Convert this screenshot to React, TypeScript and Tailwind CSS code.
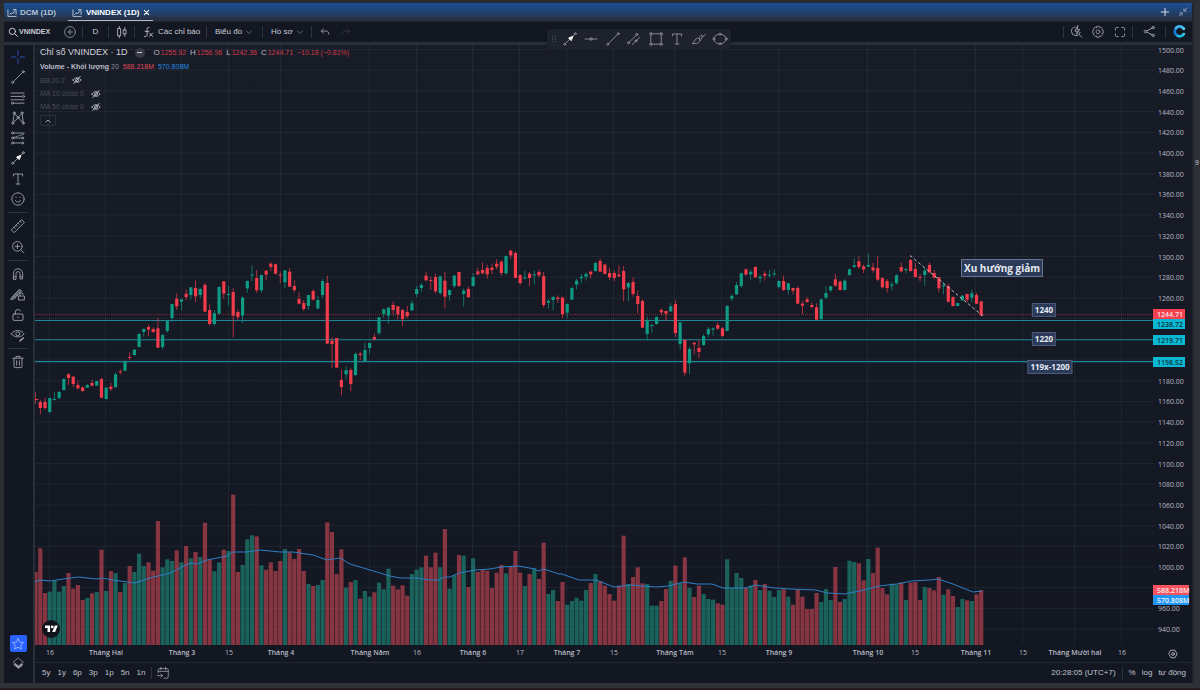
import React from "react";

/* Plot geometry: the drawing is 1119 x 600 units, three data units to one plot unit. */
const PLOT_W = 1119;
const PLOT_H = 600;
const STEP = 4.7045;
const barX = (i: number) => 0.6 + STEP * i;

/* Candles: body top, body bottom, high, low, 1 = rising / 0 = falling. */
const CANDLES: number[][] = [
  [507,510,487,521,0],[516,534,509,553,0],[516,534,503,540,0],[504,546,504,550,1],[507,510,487,511,1],
  [486,504,483,507,1],[447,480,445,482,1],[433,444,430,464,0],[440,462,437,472,0],[465,475,452,478,0],
  [472,483,470,487,0],[465,473,462,474,1],[459,467,449,469,0],[453,467,453,468,1],[447,503,443,505,0],
  [473,507,470,509,1],[470,477,458,483,0],[433,472,427,473,1],[424,427,418,433,0],[395,422,391,423,1],
  [381,384,367,391,0],[359,375,357,377,1],[312,351,310,351,1],[297,306,295,320,1],[291,299,284,319,0],
  [297,306,292,309,0],[295,353,263,354,0],[315,351,312,357,1],[273,303,272,308,1],[222,264,222,275,1],
  [206,229,190,240,0],[208,215,206,241,1],[191,201,178,211,0],[172,195,171,209,1],[174,199,151,215,0],
  [177,195,173,203,1],[165,245,158,246,0],[240,282,223,287,0],[250,282,240,287,1],[171,251,169,252,1],
  [154,191,153,207,0],[192,194,168,227,1],[186,257,175,322,0],[246,261,237,269,0],[203,257,199,279,1],
  [153,175,152,189,1],[134,137,106,153,1],[144,181,120,188,0],[135,181,134,188,1],[122,134,121,151,0],
  [101,111,97,124,0],[103,131,101,133,0],[134,137,124,160,0],[121,157,120,174,1],[125,170,114,171,0],
  [168,180,150,187,0],[207,221,187,223,0],[219,237,210,243,0],[195,228,195,240,1],[183,209,178,211,0],
  [210,235,198,238,1],[153,195,147,204,1],[159,341,137,343,0],[332,342,322,414,0],[324,413,324,413,0],
  [450,471,419,496,0],[420,433,410,448,1],[420,462,414,484,0],[372,435,367,438,1],[371,375,365,390,0],
  [360,394,338,396,1],[339,354,337,371,1],[321,328,310,332,0],[262,309,261,315,1],[238,252,235,264,1],
  [233,257,231,281,1],[225,240,214,257,0],[229,253,228,268,0],[240,267,237,287,0],[246,259,228,264,0],
  [220,241,211,243,1],[177,192,168,201,1],[165,174,160,185,1],[137,151,125,153,0],[150,153,140,180,0],
  [141,184,131,190,0],[139,189,138,195,1],[152,200,126,235,0],[180,195,179,212,1],[137,168,134,174,1],
  [126,168,125,171,0],[182,192,175,230,1],[177,201,170,204,0],[141,168,129,170,1],[124,133,113,136,0],
  [120,130,97,132,0],[114,133,104,146,0],[113,120,101,132,0],[101,110,88,118,0],[95,129,91,138,0],
  [78,130,76,134,1],[62,76,60,87,0],[69,144,64,144,0],[135,159,133,165,0],[142,145,122,149,1],
  [131,144,126,169,0],[133,136,121,163,1],[126,136,118,142,0],[138,225,126,232,0],[213,218,206,235,1],
  [201,210,198,241,1],[203,207,196,219,0],[203,252,200,264,0],[222,248,220,265,1],[174,209,170,210,1],
  [152,164,146,178,1],[140,145,132,160,1],[132,140,127,152,1],[125,133,122,146,0],[99,123,97,125,1],
  [93,125,86,126,0],[104,132,101,133,0],[129,142,113,150,0],[129,144,122,153,0],[134,139,106,142,0],
  [123,178,108,214,0],[159,172,156,213,1],[156,192,142,200,0],[198,222,181,250,0],[213,293,208,294,0],
  [270,312,260,331,1],[285,288,280,308,1],[261,282,259,284,1],[240,247,235,256,0],[243,251,242,273,0],
  [229,244,220,246,1],[222,309,211,321,0],[277,342,276,358,1],[330,428,328,437,0],[357,400,350,432,1],
  [338,343,337,374,0],[354,366,331,384,0],[318,345,312,348,1],[297,313,291,322,1],[295,299,292,317,1],
  [285,296,276,299,0],[295,318,291,321,0],[228,303,226,304,1],[198,206,192,213,1],[165,193,155,195,1],
  [130,168,128,173,1],[118,134,116,137,0],[125,133,119,149,1],[111,142,109,144,0],[140,145,134,158,1],
  [131,137,123,151,0],[134,136,120,143,1],[130,132,118,140,1],[153,171,151,176,1],[153,180,137,183,0],
  [160,180,158,194,1],[174,182,173,193,0],[174,221,168,223,0],[221,227,212,252,0],[208,216,202,218,0],
  [225,231,217,236,0],[232,269,220,270,0],[208,268,206,268,1],[189,203,168,209,1],[169,181,168,187,1],
  [148,167,132,170,0],[155,180,151,182,0],[152,180,147,182,1],[118,135,115,137,1],[106,111,84,113,1],
  [94,111,79,117,0],[109,118,104,129,0],[105,110,71,111,1],[112,121,99,128,0],[114,149,79,153,0],
  [144,172,141,175,0],[153,174,147,188,0],[163,167,155,181,1],[136,160,132,163,1],[111,124,97,127,0],
  [117,119,113,130,1],[90,123,87,125,0],[117,141,98,142,0],[141,143,132,154,0],[122,135,113,167,1],
  [105,127,97,130,0],[129,143,120,145,0],[142,175,141,187,0],[166,168,157,193,1],[168,215,161,218,0],
  [201,228,199,230,0],[219,228,218,229,1],[197,211,195,212,1],[192,209,191,217,0],[190,203,179,217,1],
  [195,221,189,222,0],[214,256,213,258,0],
];

/* Tops of the volume bars, measured down from 495 at the base line. */
const VOLUME: number[] = [
  276,205,339,335,301,335,318,279,326,315,360,354,340,336,209,333,273,279,336,309,
  258,276,221,258,247,272,123,262,238,243,211,247,198,235,216,231,128,237,274,247,
  209,213,44,276,255,178,166,169,256,269,247,273,243,207,217,237,207,273,312,318,
  315,300,127,156,282,208,323,306,300,356,333,350,337,308,328,266,317,328,316,347,
  282,269,262,227,262,218,262,147,326,286,225,227,321,235,276,270,272,324,278,255,
  280,260,213,278,318,282,265,297,188,342,330,363,306,374,363,353,362,330,309,282,
  303,317,342,362,317,167,312,291,262,310,312,377,377,363,327,303,257,310,232,324,
  351,317,342,357,359,370,374,238,323,279,294,323,317,300,330,312,332,351,330,328,
  350,374,327,350,387,387,339,366,327,360,261,366,357,242,246,250,301,237,279,203,
  324,343,311,314,307,360,308,306,360,321,324,331,291,344,328,348,381,357,361,363,
  343,330,
];

const VOLUME_AVERAGE =
  "0,537 5,535 15,536 28,534 43,532 62,534 67,533 78,535 100,538 115,533 135,528 155,518 162,519 172,515 192,511 198,507 212,507 225,505 245,507 258,507 278,510 292,515 305,513 315,519 335,525 355,531 365,533 382,533 395,535 403,535 410,532 415,532 424,528 440,525 455,524 466,522 483,521 500,524 503,526 509,524 524,529 527,529 544,535 561,535 579,542 596,540 607,541 622,542 633,541 649,537 662,539 677,539 688,543 711,543 720,540 740,543 755,544 781,545 792,548 810,549 829,545 844,541 862,539 877,536 894,535 903,534 918,539 938,547 947,546";

const TIMES: { x: number; label: string }[] = [
  { x: 15, label: "16" },
  { x: 71, label: "Tháng Hai" },
  { x: 147, label: "Tháng 3" },
  { x: 194, label: "15" },
  { x: 246, label: "Tháng 4" },
  { x: 335, label: "Tháng Năm" },
  { x: 382, label: "16" },
  { x: 438, label: "Tháng 6" },
  { x: 485, label: "17" },
  { x: 532, label: "Tháng 7" },
  { x: 579, label: "15" },
  { x: 640, label: "Tháng Tám" },
  { x: 687, label: "15" },
  { x: 744, label: "Tháng 9" },
  { x: 833, label: "Tháng 10" },
  { x: 880, label: "15" },
  { x: 941, label: "Tháng 11" },
  { x: 988, label: "15" },
  { x: 1040, label: "Tháng Mười hai" },
  { x: 1087, label: "16" },
];

const PRICES = Array.from({ length: 29 }, (_, i) => ({ value: 1500 - i * 20, y: 4.5 + i * 20.7 }));

const TAGS = [
  { y: 269, text: "1244.71", look: "bg-[#f7404f] text-[#ffe1e3] w-8" },
  { y: 279, text: "1238.72", look: "bg-[#0bb8d4] text-[#08323c] w-8" },
  { y: 295, text: "1219.71", look: "bg-[#0bb8d4] text-[#08323c] w-8" },
  { y: 317, text: "1198.52", look: "bg-[#0bb8d4] text-[#08323c] w-8" },
  { y: 545, text: "588.218M", look: "bg-[#f7525f] text-[#ffe9ea] w-9" },
  { y: 555, text: "570.808M", look: "bg-[#2196f3] text-[#e9f5ff] w-9" },
];

/* An axis price is left out where a tag covers it. */
const AXIS_PRICES = PRICES.filter((p) => TAGS.every((t) => Math.abs(t.y - p.y) > 8));

const NOTES = [
  { x: 1009, y: 265, text: "1240" },
  { x: 1009, y: 294, text: "1220" },
  { x: 1015, y: 322, text: "119x-1200" },
];

function Icon({ children, className = "size-4" }: { children: React.ReactNode; className?: string }) {
  return (
    <svg viewBox="0 0 16 16" className={className + " shrink-0"} fill="none" stroke="currentColor" strokeWidth="0.9" strokeLinecap="round" strokeLinejoin="round" aria-hidden="true">
      {children}
    </svg>
  );
}

const TrendLine = () => (
  <Icon>
    <path d="M3.4 12.6 12.6 3.4" />
    <circle cx="2.7" cy="13.3" r="1" />
    <circle cx="13.3" cy="2.7" r="1" />
  </Icon>
);
const ArrowLine = () => (
  <Icon>
    <path d="M3.4 12.6 12.6 3.4" />
    <circle cx="2.7" cy="13.3" r="1" />
    <circle cx="13.3" cy="2.7" r="1" />
    <path d="M10.6 5.4 6.6 7 9 9.4z" fill="#fff" stroke="#fff" />
  </Icon>
);
const TextTool = () => (
  <Icon>
    <path d="M3.4 5V3h9.2v2M8 3v10M6.2 13h3.6" />
  </Icon>
);
const ChartTab = () => (
  <Icon className="size-[10px]">
    <path strokeWidth="1.5" d="M1.5 3v10.5H14.5M4.5 10.5 7 7.5l2 2 4-6M10 2.5h4.5V10" />
  </Icon>
);
const Chevron = () => (
  <Icon className="size-2 text-[#6f7380]">
    <path strokeWidth="1.6" d="M3 6l5 5 5-5" />
  </Icon>
);

const DRAW_TOOLS: { name: string; icon: React.ReactNode; tint?: string }[] = [
  { name: "Chữ thập", tint: "text-[#2f52cc]", icon: <Icon><path d="M8 1.5V6M8 10v4.5M1.5 8H6M10 8h4.5" /></Icon> },
  { name: "Đường xu hướng", icon: <TrendLine /> },
  {
    name: "Fibonacci",
    icon: (
      <Icon>
        <path d="M1 3h13M1 6.4h11.4M1 9.8h13M3.6 13.2H14" />
        <circle cx="13.6" cy="6.4" r="1" /><circle cx="2.4" cy="13.2" r="1" />
      </Icon>
    ),
  },
  {
    name: "Mẫu hình",
    icon: (
      <Icon>
        <path d="M3 12.4 4.2 3.8M4.8 3.6 7.6 7M8.6 7l3.2-3.4M12.2 3.8 13.2 12.4M3.4 12.4 7.6 8.4M8.6 8.4l4.2 4" />
        <circle cx="2.8" cy="13.2" r="1" /><circle cx="4.2" cy="2.9" r="1" /><circle cx="8.1" cy="7.7" r="1" /><circle cx="12" cy="2.9" r="1" /><circle cx="13.3" cy="13.2" r="1" />
      </Icon>
    ),
  },
  {
    name: "Dự báo",
    icon: (
      <Icon>
        <path d="M3.8 3h10.4M3.8 8h7.4M3.8 13h7.4" />
        <path strokeDasharray="1 1.4" d="M3.6 7.4 13.6 4.4" />
        <circle cx="2.6" cy="3" r="1" /><circle cx="2.6" cy="8" r="1" /><circle cx="12.6" cy="8" r="1" /><circle cx="2.6" cy="13" r="1" /><circle cx="12.6" cy="13" r="1" />
      </Icon>
    ),
  },
  { name: "Mũi tên", icon: <ArrowLine /> },
  { name: "Văn bản", icon: <TextTool /> },
  {
    name: "Biểu tượng",
    icon: (
      <Icon>
        <circle cx="8" cy="8" r="6.2" /><path d="M5.4 9.4c.8 2.2 4.4 2.2 5.2 0M6 6.2v.4M10 6.2v.4" />
      </Icon>
    ),
  },
];

const MEASURE_TOOLS = [
  {
    name: "Thước đo",
    icon: (
      <Icon>
        <path d="M1.6 11.6 11.6 1.6l2.8 2.8L4.4 14.4zM4 9.2l1.2 1.2M6 7.2l1.2 1.2M8 5.2l1.2 1.2M10 3.2l1.2 1.2" />
      </Icon>
    ),
  },
  {
    name: "Phóng to",
    icon: (
      <Icon>
        <circle cx="7.4" cy="7.4" r="4.8" /><path d="M11 11l3 3M7.4 5.4v4M5.4 7.4h4" />
      </Icon>
    ),
  },
];

const LOCK_TOOLS = [
  {
    name: "Nam châm",
    icon: (
      <Icon>
        <path d="M3.4 13V7.4a4.6 4.6 0 0 1 9.2 0V13H10V7.6a2 2 0 0 0-4 0V13zM3.4 10.8H6M10 10.8h2.6" />
      </Icon>
    ),
  },
  {
    name: "Giữ chế độ vẽ",
    icon: (
      <Icon>
        <path d="M1.8 11.4 9.6 3.2l2 2-8 7.8-2.4.6zM3.4 9.8l2 2M5.4 7.6l1.6 1.8" fill="currentColor" fillOpacity="0.5" />
        <rect x="8.8" y="10" width="5.6" height="4" fill="#131722" /><path d="M10 10V8.8a1.6 1.6 0 0 1 3.2-.4" />
      </Icon>
    ),
  },
  {
    name: "Khóa hình vẽ",
    icon: (
      <Icon>
        <rect x="3" y="7" width="10" height="6.4" rx="1" /><path d="M5.4 7V5a2.6 2.6 0 0 1 5-1M8 9.8v.8" />
      </Icon>
    ),
  },
  {
    name: "Ẩn hình vẽ",
    icon: (
      <Icon>
        <path d="M1.4 6.8C4 2.4 11.4 2.4 14 6.8 11.4 11 4 11 1.4 6.8z" /><circle cx="7.8" cy="6.8" r="2" />
        <path strokeWidth="1.6" d="M10 13.8l3.4-2.8" />
      </Icon>
    ),
  },
];

const FAVOURITES = [
  { name: "Mũi tên", icon: <ArrowLine /> },
  { name: "Đường ngang", icon: <Icon><path d="M2 8h4.4M9.6 8H14" /><circle cx="8" cy="8" r="1.2" fill="currentColor" fillOpacity="0.4" /></Icon> },
  { name: "Đường xu hướng", icon: <TrendLine /> },
  {
    name: "Kênh song song",
    icon: (
      <Icon>
        <path d="M3 11.4 10.4 4M6.4 13.4l7.2-7.2" />
        <circle cx="2.6" cy="11.8" r="1" /><circle cx="10.8" cy="3.4" r="1" /><circle cx="10" cy="9.8" r="1" />
      </Icon>
    ),
  },
  {
    name: "Hình chữ nhật",
    icon: (
      <Icon>
        <path d="M4 2.8h8M4 13.2h8M2.8 4v8M13.2 4v8" />
        <circle cx="2.8" cy="2.8" r="1.2" /><circle cx="13.2" cy="2.8" r="1.2" /><circle cx="2.8" cy="13.2" r="1.2" /><circle cx="13.2" cy="13.2" r="1.2" />
      </Icon>
    ),
  },
  { name: "Văn bản", icon: <TextTool /> },
  {
    name: "Cọ vẽ",
    icon: (
      <Icon>
        <path d="M1.6 12.6c2.2-.4 1.6-5.4 5-5.4 3 0 3.2 5.4-2 5.4zM8.2 7.6c.6-2 1.4-3.2 2.4-3.6l1 2 2.8-2.8M9.2 9.4l2.2-3.2" />
      </Icon>
    ),
  },
  {
    name: "Hình elip",
    icon: (
      <Icon>
        <ellipse cx="8" cy="8" rx="6.2" ry="4.8" />
        <circle cx="8" cy="3.2" r="1" fill="#1e222d" /><circle cx="8" cy="12.8" r="1" fill="#1e222d" /><circle cx="1.8" cy="8" r="1" fill="#1e222d" /><circle cx="14.2" cy="8" r="1" fill="#1e222d" />
      </Icon>
    ),
  },
];

function ToolButton({ name, icon, tint = "text-[#9da1ad]" }: { name: string; icon: React.ReactNode; tint?: string }) {
  return (
    <button type="button" aria-label={name} className={"flex size-5 shrink-0 items-center justify-center " + tint}>
      {icon}
    </button>
  );
}

const Rule = () => <span className="h-3 w-px shrink-0 bg-[#2f333f]" />;

function TabBar() {
  return (
    <header className="flex h-[18px] shrink-0 items-stretch bg-linear-to-b from-[#1b4f93] via-[#1f426f] to-[#272c38] text-[8px] font-bold text-[#c9d3e2]">
      <nav className="flex items-stretch gap-3 pl-[3px]">
        <a href="#dcm" className="flex items-center gap-[3px] pt-px text-[#b4c0d2]">
          <ChartTab />
          DCM (1D)
        </a>
        <span className="flex items-center gap-1 border-b border-[#aeb9c9] pt-[2px] pr-[3px] pl-1 text-white">
          <a href="#vnindex" className="flex items-center gap-1">
            <span className="text-[#b4c0d2]"><ChartTab /></span>
            VNINDEX (1D)
          </a>
          <button type="button" aria-label="Đóng" className="flex size-[7px]">
            <Icon className="size-[7px]"><path strokeWidth="2.4" d="M3 3l10 10M13 3 3 13" /></Icon>
          </button>
        </span>
      </nav>
      <div className="ml-auto flex items-center gap-2 pr-1">
        <button type="button" aria-label="Thêm"><Icon className="size-[10px]"><path strokeWidth="1.8" d="M8 2v12M2 8h12" /></Icon></button>
        <button type="button" aria-label="Thu nhỏ" className="text-[#8d9db4]">
          <Icon className="size-[10px]"><path strokeWidth="1.6" d="M14.5 1.5l-5 5M9.500 3v3.500H13M1.500 14.500l5-5M3 9.500h3.500V13" /></Icon>
        </button>
      </div>
    </header>
  );
}

function TopToolbar() {
  return (
    <div className="flex h-5 shrink-0 items-center bg-[#131722] pb-px text-[8px] text-[#c9ccd4]">
      <button type="button" className="flex w-[53px] shrink-0 items-center gap-px pl-1 text-[7px] font-bold">
        <Icon className="size-[10px]"><circle strokeWidth="1.6" cx="7" cy="7" r="5" /><path strokeWidth="1.6" d="M11 11l4 4" /></Icon>
        VNINDEX
      </button>
      <button type="button" aria-label="So sánh" className="flex w-[25px] shrink-0 justify-center text-[#9da1ad]">
        <Icon className="size-[14px]"><circle cx="8" cy="8" r="6.2" /><path d="M8 5v6M5 8h6" /></Icon>
      </button>
      <Rule />
      <button type="button" className="w-[25px] shrink-0">D</button>
      <Rule />
      <button type="button" aria-label="Kiểu nến" className="flex w-[25px] shrink-0 justify-center">
        <Icon className="size-[14px]"><path d="M3.4 4h3v8.4h-3zM4.9 1.500V4M4.900 12.400v2.200M9.800 5.600h2.800v4.600H9.800zM11.200 3v2.600M11.200 10.200V13" /></Icon>
      </button>
      <Rule />
      <button type="button" className="flex w-[71px] shrink-0 items-center gap-1 pl-2 whitespace-nowrap">
        <Icon className="h-3 w-[11px]"><path strokeWidth="1.2" d="M9 1.500c-2.400-.8-3 .6-3 2.500v8c0 2-1 3-4 2.500M3 7h5.500M9.500 9.500l4.500 5M14 9.500l-4.500 5" /></Icon>
        Các chỉ báo
      </button>
      <Rule />
      <button type="button" className="flex w-[55px] shrink-0 items-center gap-[3px] pl-2 whitespace-nowrap">Biểu đồ <Chevron /></button>
      <Rule />
      <button type="button" className="flex w-12 shrink-0 items-center gap-[3px] pl-2 whitespace-nowrap">Hồ sơ <Chevron /></button>
      <Rule />
      <button type="button" aria-label="Hoàn tác" className="flex w-[26px] shrink-0 justify-center text-[#9599a5]">
        <Icon className="size-[10px]"><path strokeWidth="1.5" d="M5.500 3 2 6.500 5.500 10M2 6.500h8c2.500 0 4 1.500 4 5" /></Icon>
      </button>
      <button type="button" aria-label="Làm lại" className="flex w-4 shrink-0 justify-center text-[#343844]">
        <Icon className="size-[10px]"><path strokeWidth="1.5" d="M10.500 3 14 6.500 10.500 10M14 6.500H6c-2.500 0-4 1.500-4 5" /></Icon>
      </button>
      <div className="ml-auto flex items-center text-[#9ca0ab]">
        <Rule />
        <button type="button" aria-label="Tìm nhanh" className="flex w-6 justify-center">
          <Icon className="size-[13px]"><path strokeWidth="1.2" d="M6 2.400A5.400 5.400 0 1 0 12.400 9M11 11.500l3.500 3.500M9.500 1 6 7.500h3L8 11.500l4-6H9.400z" /></Icon>
        </button>
        <button type="button" aria-label="Cài đặt" className="flex w-5 justify-center">
          <Icon className="size-[14px]">
            <path d="M6.600 1.500h2.800l.4 1.700 1.500-.9 2 2-.9 1.500 1.700.5v2.900l-1.700.5.9 1.500-2 2-1.500-.9-.4 1.700H6.600l-.4-1.700-1.500.9-2-2 .9-1.500-1.700-.5V6.300l1.700-.5-.9-1.500 2-2 1.500.9z" />
            <circle cx="8" cy="7.800" r="2.200" />
          </Icon>
        </button>
        <button type="button" aria-label="Toàn màn hình" className="flex w-6 justify-center">
          <Icon className="size-3"><path strokeWidth="1.2" d="M2 5.500v-2A1.500 1.500 0 0 1 3.500 2h2M10.500 2h2A1.500 1.500 0 0 1 14 3.500v2M14 10.500v2a1.500 1.500 0 0 1-1.500 1.500h-2M5.500 14h-2A1.500 1.500 0 0 1 2 12.500v-2" /></Icon>
        </button>
        <Rule />
        <button type="button" aria-label="Chia sẻ" className="flex w-8 justify-center">
          <Icon className="size-[13px]"><circle strokeWidth="1.2" cx="3" cy="8" r="1.5" /><circle strokeWidth="1.2" cx="12.5" cy="3.2" r="1.5" /><circle strokeWidth="1.2" cx="12.5" cy="12.8" r="1.5" /><path strokeWidth="1.2" d="M4.500 7.300 11 4M4.500 8.700 11 12" /></Icon>
        </button>
        <Rule />
        <span className="flex w-[26px] justify-center">
          <svg viewBox="0 0 16 16" className="size-[13px]" fill="none" aria-hidden="true">
            <path d="M13 4.800A5.400 5.400 0 0 0 3 5.200" stroke="#3fb4f0" strokeWidth="3.400" />
            <path d="M3 5.200A5.400 5.400 0 0 0 4.500 12.300" stroke="#1279d8" strokeWidth="3.400" />
            <path d="M4.500 12.300A5.400 5.400 0 0 0 13 11.200" stroke="#22b9e8" strokeWidth="3.400" />
            <circle cx="13.2" cy="4.6" r="1.8" fill="#5ed0f5" />
            <circle cx="13.2" cy="11.2" r="1.8" fill="#2fd0e0" />
          </svg>
        </span>
      </div>
    </div>
  );
}

function SideBar() {
  return (
    <aside className="flex w-[29px] shrink-0 flex-col items-center bg-[#131722] pt-[2px] pr-px pb-3">
      <div className="flex h-[162px] flex-col justify-between">{DRAW_TOOLS.map((t) => <ToolButton key={t.name} {...t} />)}</div>
      <span className="my-[3px] h-px w-5 shrink-0 bg-[#2f333f]" />
      <div className="flex h-[41px] flex-col justify-between">{MEASURE_TOOLS.map((t) => <ToolButton key={t.name} {...t} />)}</div>
      <span className="my-[3px] h-px w-5 shrink-0 bg-[#2f333f]" />
      <div className="flex h-[81px] flex-col justify-between">{LOCK_TOOLS.map((t) => <ToolButton key={t.name} {...t} />)}</div>
      <span className="my-[3px] h-px w-5 shrink-0 bg-[#2f333f]" />
      <ToolButton
        name="Xóa"
        icon={<Icon><path d="M2.800 4.200h10.400M6 4V2.400h4V4M4 4.400v8.200c0 .6.400 1 1 1h6c.6 0 1-.4 1-1V4.400M6.600 6.800v4.400M9.400 6.800v4.400" /></Icon>}
      />
      <button type="button" aria-label="Yêu thích" className="mt-auto flex size-[17px] shrink-0 items-center justify-center rounded-[2px] bg-[#2962ff] text-[#a9c1ff]">
        <Icon className="size-[14px]"><path d="M8 1.800l1.900 4 4.300.6-3.100 3 .8 4.400L8 11.700l-3.900 2.100.8-4.400-3.100-3 4.300-.6z" /></Icon>
      </button>
      <button type="button" aria-label="Cây đối tượng" className="mt-1 flex size-[15px] shrink-0 items-center justify-center text-[#9da1ad]">
        <Icon className="size-[13px]"><path d="M8 1.500 14 6.500 8 11 2 6.500z" /><path d="M2.500 9.500 8 14l5.500-4.500-1.500-.9-4 2.900-4-2.900z" fill="currentColor" /></Icon>
      </button>
    </aside>
  );
}

function Plot() {
  return (
    <svg viewBox={`0 0 ${PLOT_W} ${PLOT_H}`} preserveAspectRatio="none" className="absolute inset-0 size-full" role="img" aria-label="Biểu đồ nến VNINDEX">
      <g stroke="#8c96b4" strokeOpacity="0.09" strokeWidth="1">
        {PRICES.map((p) => <path key={p.value} d={`M0 ${p.y}H${PLOT_W}`} />)}
        {TIMES.map((t) => <path key={t.x} d={`M${t.x - 0.5} 0V${PLOT_H}`} />)}
      </g>
      <g fillOpacity="0.5">
        {VOLUME.map((v, i) => (
          <rect key={i} x={Math.max(0, barX(i) - 2.1)} y={PLOT_H - (495 - v) / 3} width={i === 0 ? 2.7 : 4.2} height={(495 - v) / 3} fill={CANDLES[i][4] ? "#22ab94" : "#f7525f"} />
        ))}
      </g>
      <polyline points={VOLUME_AVERAGE} fill="none" stroke="#2f7fc4" strokeWidth="1" />
      <path d="M0 269.5H1119" stroke="#f23645" strokeOpacity="0.5" strokeWidth="1" strokeDasharray="1 1" />
      <g stroke="#1c8796" strokeWidth="1.1">
        <path d="M0 275.5H1119" />
        <path d="M0 294.8H1119" />
        <path d="M0 316.6H1119" />
      </g>
      {CANDLES.map(([top, bottom, high, low, up], i) => {
        const x = barX(i);
        return (
          <g key={i} fill={up ? "#0f9a84" : "#f23c4b"}>
            <rect x={x - 0.4} y={185 + high / 3} width="0.8" height={(low - high) / 3} fillOpacity="0.85" />
            <rect x={Math.max(0, x - 1.6)} y={185 + top / 3} width="3.2" height={Math.max(1, (bottom - top) / 3)} />
          </g>
        );
      })}
      <path d="M875 210.5 948.5 271.5" stroke="#d0d3db" strokeWidth="0.9" strokeDasharray="3 2.4" />
    </svg>
  );
}

const HiddenEye = () => (
  <Icon className="size-[10px] text-[#a9adb8]"><path strokeWidth="1.5" d="M1.500 8C4 3 12 3 14.500 8 12 13 4 13 1.500 8zM13.500 2l-11 12" /><circle strokeWidth="1.5" cx="8" cy="8" r="2.4" /></Icon>
);

function Legend() {
  const values = [["O", "1255.92"], ["H", "1256.96"], ["L", "1242.36"], ["C", "1244.71"]];
  return (
    <div className="absolute top-0 left-[5px] text-[7px] whitespace-nowrap text-[#b9bdc7]">
      <div className="flex h-[15px] items-center">
        <h1 className="text-[9px] text-[#d1d4dc]">Chỉ số VNINDEX · 1D</h1>
        <span className="ml-[7px] flex size-[10px] items-center justify-center rounded-full bg-[#373b46]"><span className="h-px w-[5px] bg-[#c5c8d0]" /></span>
        <dl className="ml-[9px] flex items-center gap-1">
          {values.map(([name, value]) => (
            <div key={name} className="flex items-center gap-px">
              <dt className="text-[8px]">{name}</dt>
              <dd className="text-[#cf3a4a]">{value}</dd>
            </div>
          ))}
          <div className="text-[#cf3a4a]">−10.18 (−0.81%)</div>
        </dl>
      </div>
      <div className="flex h-[13px] items-center">
        <span className="font-bold">Volume - Khối lượng</span>
        <span className="ml-[2px] text-[#8f939e]">20</span>
        <span className="ml-1 text-[#e04857]">588.218M</span>
        <span className="ml-1 text-[#2589e0]">570.808M</span>
      </div>
      {["BB 20 2", "MA 10 close 0", "MA 50 close 0"].map((t) => (
        <div key={t} className="flex h-[14px] items-center gap-[7px] text-[#4a4e59] nth-4:h-[13px] nth-5:h-[13px]">
          {t} <HiddenEye />
        </div>
      ))}
      <button type="button" aria-label="Thu gọn" className="mt-[2px] flex h-[11px] w-4 items-center justify-center rounded-[2px] border border-[#2b2f3a]">
        <Icon className="size-2"><path strokeWidth="1.8" d="M4 10l4-4 4 4" /></Icon>
      </button>
    </div>
  );
}

function BottomBar() {
  return (
    <footer className="flex h-[21px] shrink-0 items-center border-t border-[#222632] bg-[#131722] pr-[6px] pb-px pl-[7px] text-[8px] text-[#c0c3cc]">
      <div className="flex gap-[7px]">
        {["5y", "1y", "6p", "3p", "1p", "5n", "1n"].map((r) => <button key={r} type="button">{r}</button>)}
      </div>
      <span className="mr-1 ml-[6px] h-3 w-px bg-[#2f333f]" />
      <button type="button" aria-label="Đi tới ngày" className="text-[#9da1ad]">
        <Icon className="size-[14px]"><path d="M2.500 8V4.500A1.500 1.500 0 0 1 4 3h8.500A1.500 1.500 0 0 1 14 4.500v8a1.500 1.500 0 0 1-1.500 1.500H9M2.500 6.200H14M5.500 1.500v3M11 1.500v3M1.500 11h6M5.500 9l2 2-2 2" /></Icon>
      </button>
      <div className="ml-auto flex items-center gap-[6px] whitespace-nowrap">
        <button type="button">20:28:05 (UTC+7)</button>
        <Rule />
        <button type="button">%</button>
        <button type="button">log</button>
        <button type="button">tự động</button>
      </div>
    </footer>
  );
}

export default function App() {
  return (
    <div className="flex h-screen min-h-[480px] flex-col overflow-hidden bg-[#2a2c32] font-['Liberation_Sans',Arial,sans-serif] leading-none">
      <div className="flex min-h-0 flex-1 pt-[3px] pl-1">
        <div className="flex min-w-0 flex-1 flex-col">
          <TabBar />
          <div className="h-px shrink-0 bg-[#20242e]" />
          <TopToolbar />
          <div className="flex min-h-0 flex-1 gap-[2px] border-t-3 border-[#2a2e39] bg-[#2a2e39]">
            <SideBar />
            <main className="flex min-w-0 flex-1 flex-col">
              <div className="flex min-h-0 flex-1 bg-linear-to-b from-[#181c27] to-[#131722]">
                <div className="relative min-w-0 flex-1">
                  <Plot />
                  <Legend />
                  <div className="absolute top-[214px] left-[82.75%] flex h-[18px] items-center border border-[#66748f] bg-[#2b3a58] px-[2px] font-['Open_Sans','Noto_Sans',sans-serif] text-[10px] font-bold whitespace-nowrap text-[#e6eaf2]">Xu hướng giảm</div>
                  {NOTES.map((n) => (
                    <div
                      key={n.text}
                      className="absolute flex h-[14px] -translate-1/2 items-center border border-[#4c5b78] bg-[#2b3a58] px-[2px] font-['Open_Sans','Noto_Sans',sans-serif] text-[8px] font-bold whitespace-nowrap text-[#e6eaf2]"
                      style={{ left: `${(n.x / PLOT_W) * 100}%`, top: `${(n.y / PLOT_H) * 100}%` }}
                    >
                      {n.text}
                    </div>
                  ))}
                  <span className="absolute bottom-[7px] left-[7px] flex size-[18px] items-center justify-center rounded-full bg-[#10131c]">
                    <svg viewBox="0 0 36 28" className="w-[13px]" fill="#fff" aria-label="TradingView">
                      <path d="M14 22H7V11H0V4h14v18zM28 22h-8l7.500-18h8L28 22z" />
                      <circle cx="20" cy="8" r="4" />
                    </svg>
                  </span>
                </div>
                <div className="relative w-[38px] shrink-0 font-['Open_Sans','Noto_Sans',sans-serif] text-[7px] font-medium text-[#b6bac4]">
                  {AXIS_PRICES.map((p) => (
                    <span key={p.value} className="absolute left-1 -translate-y-1/2" style={{ top: `${(p.y / PLOT_H) * 100}%` }}>
                      {p.value}.00
                    </span>
                  ))}
                  {TAGS.map((t) => (
                    <span
                      key={t.text}
                      className={"absolute -left-px flex h-[10px] -translate-y-1/2 items-center pl-[4px] font-semibold " + t.look}
                      style={{ top: `${(t.y / PLOT_H) * 100}%` }}
                    >
                      {t.text}
                    </span>
                  ))}
                </div>
              </div>
              <div className="flex h-[17px] shrink-0 bg-[#131722] font-['Open_Sans','Noto_Sans',sans-serif] text-[7px] font-medium text-[#b6bac4]">
                <div className="relative flex-1">
                  {TIMES.map((t) => (
                    <span
                      key={t.x}
                      className={"absolute top-1 -translate-x-1/2 whitespace-nowrap " + (t.label.startsWith("T") ? "font-semibold" : "")}
                      style={{ left: `${(t.x / PLOT_W) * 100}%` }}
                    >
                      {t.label}
                    </span>
                  ))}
                </div>
                <div className="flex w-[38px] items-center justify-center">
                  <button type="button" aria-label="Cài đặt trục">
                    <Icon className="size-[10px]"><path strokeWidth="1.4" d="M4.800 2h6.400L14.500 8l-3.300 6H4.800L1.500 8z" /><circle strokeWidth="1.4" cx="8" cy="8" r="2.2" /></Icon>
                  </button>
                </div>
              </div>
              <BottomBar />
            </main>
          </div>
        </div>
        <div className="flex w-2 shrink-0 flex-col border-l-2 border-[#22252d] bg-[#2d3037] pt-[156px] pl-px text-[7px] text-[#c0c3cc]">9</div>
      </div>
      <div className="h-[7px] shrink-0 border-b-2 border-[#241b22] bg-[#303238]" />

      <div className="absolute top-[29px] left-[547px] flex h-5 items-center rounded-[3px] bg-[#1e222d] pr-px text-[#8e929d] shadow">
        <span className="flex w-[13px] justify-center text-[#4a4e5a]">
          <svg viewBox="0 0 6 10" className="h-[10px] w-[6px]" fill="currentColor" aria-hidden="true">
            <path d="M1 1h1v1H1zM4 1h1v1H4zM1 3h1v1H1zM4 3h1v1H4zM1 5h1v1H1zM4 5h1v1H4zM1 7h1v1H1zM4 7h1v1H4z" />
          </svg>
        </span>
        <div className="flex w-[170px] justify-between">
          {FAVOURITES.map((f) => (
            <button key={f.name} type="button" aria-label={f.name} className="flex w-5 justify-center">{f.icon}</button>
          ))}
        </div>
      </div>
    </div>
  );
}
